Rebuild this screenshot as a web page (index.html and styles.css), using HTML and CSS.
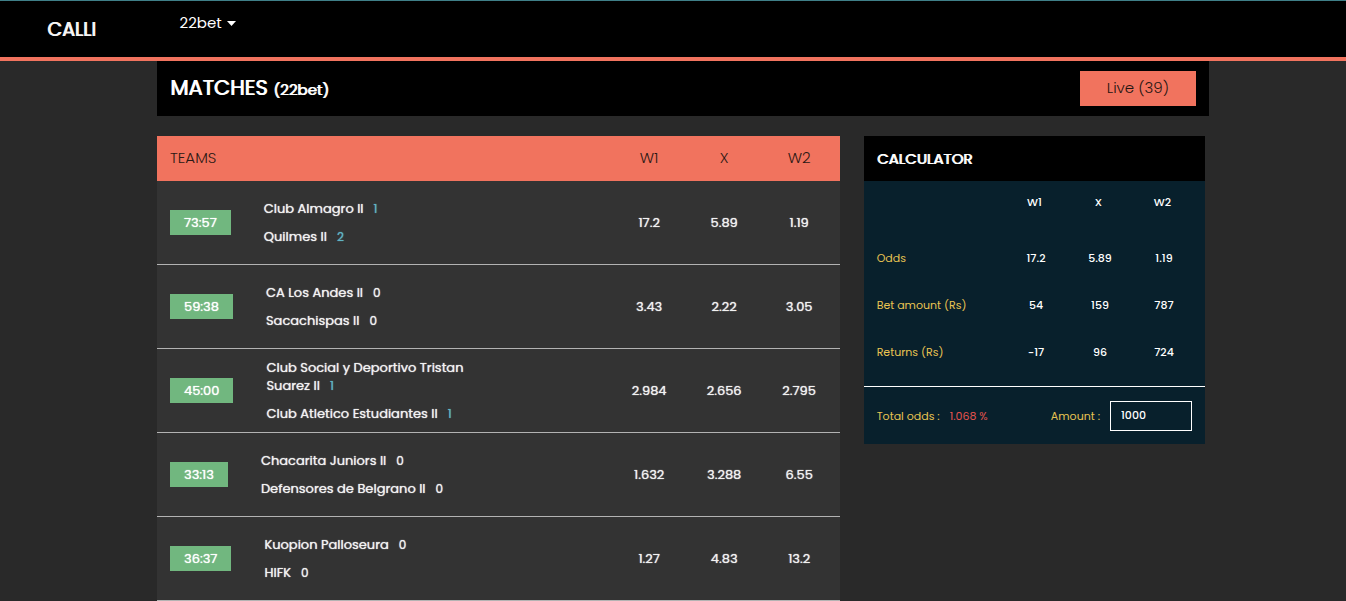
FILE: index.html
```html
<!DOCTYPE html>
<html lang="en">
<head>
<meta charset="utf-8">
<meta name="viewport" content="width=device-width, initial-scale=1">
<title>CALLI</title>
<link rel="stylesheet" href="styles.css">
</head>
<body>
<header class="navbar">
  <a class="brand" href="#">CALLI</a>
  <button class="site-menu" type="button" aria-haspopup="true">22bet
    <svg class="caret" viewBox="0 0 9 5" aria-hidden="true"><path d="M0 0H9L4.500 5Z"/></svg>
  </button>
</header>
<main class="page">
  <section class="title-bar">
    <h1 class="title">MATCHES <small class="title-site">(22bet)</small></h1>
    <button class="live-button" type="button">Live (39)</button>
  </section>
  <div class="columns">
    <table class="matches">
      <thead>
        <tr><th class="teams-head" scope="col">TEAMS</th><th class="odd" scope="col">W1</th><th class="odd" scope="col">X</th><th class="odd odd-last" scope="col">W2</th></tr>
      </thead>
      <tbody>
        <tr>
          <td><div class="match"><span class="time">73:57</span><div class="teams"><p class="team">Club Almagro II<span class="score scored">1</span></p><p class="team">Quilmes II<span class="score scored">2</span></p></div></div></td>
          <td class="odd">17.2</td><td class="odd">5.89</td><td class="odd odd-last">1.19</td>
        </tr>
        <tr>
          <td><div class="match"><span class="time">59:38</span><div class="teams"><p class="team">CA Los Andes II<span class="score">0</span></p><p class="team">Sacachispas II<span class="score">0</span></p></div></div></td>
          <td class="odd">3.43</td><td class="odd">2.22</td><td class="odd odd-last">3.05</td>
        </tr>
        <tr>
          <td><div class="match"><span class="time">45:00</span><div class="teams"><p class="team">Club Social y Deportivo Tristan Suarez II<span class="score scored">1</span></p><p class="team">Club Atletico Estudiantes II<span class="score scored">1</span></p></div></div></td>
          <td class="odd">2.984</td><td class="odd">2.656</td><td class="odd odd-last">2.795</td>
        </tr>
        <tr>
          <td><div class="match"><span class="time">33:13</span><div class="teams"><p class="team">Chacarita Juniors II<span class="score">0</span></p><p class="team">Defensores de Belgrano II<span class="score">0</span></p></div></div></td>
          <td class="odd">1.632</td><td class="odd">3.288</td><td class="odd odd-last">6.55</td>
        </tr>
        <tr>
          <td><div class="match"><span class="time">36:37</span><div class="teams"><p class="team">Kuopion Palloseura<span class="score">0</span></p><p class="team">HIFK<span class="score">0</span></p></div></div></td>
          <td class="odd">1.27</td><td class="odd">4.83</td><td class="odd odd-last">13.2</td>
        </tr>
      </tbody>
    </table>
    <aside class="calculator">
      <h2 class="calc-title">CALCULATOR</h2>
      <div class="calc-body">
        <table class="calc-table">
          <thead>
            <tr><td></td><th class="calc-col" scope="col">W1</th><th class="calc-col" scope="col">X</th><th class="calc-col" scope="col">W2</th></tr>
          </thead>
          <tbody>
            <tr><th class="calc-label" scope="row">Odds</th><td>17.2</td><td>5.89</td><td>1.19</td></tr>
            <tr><th class="calc-label" scope="row">Bet amount (Rs)</th><td>54</td><td>159</td><td>787</td></tr>
            <tr><th class="calc-label" scope="row">Returns (Rs)</th><td>-17</td><td>96</td><td>724</td></tr>
          </tbody>
        </table>
      </div>
      <div class="calc-footer">
        <span class="calc-total">Total odds :</span>
        <span class="calc-percent">1.068 %</span>
        <label class="amount-label" for="amount">Amount :</label>
        <input class="amount" id="amount" type="text" inputmode="numeric" value="1000">
      </div>
    </aside>
  </div>
</main>
</body>
</html>
```
FILE: styles.css
```css
* {
  box-sizing: border-box;
}

body {
  margin: 0;
  background: #292929;
  color: #fff;
  font-family: Poppins, Inter, "Noto Sans", sans-serif;
  font-size: 13px;
  line-height: 18px;
}

button,
input {
  font-family: inherit;
}

h1, h2, p {
  margin: 0;
}

table {
  border-collapse: collapse;
}

th, td {
  padding: 0;
}

.navbar {
  display: flex;
  align-items: flex-start;
  gap: 84px;
  height: 61px;
  padding: 10px 47px 0;
  background: #000;
  border-top: 1px solid #3f7f88;
  border-bottom: 4px solid #f1735e;
}

.brand {
  padding-top: 6px;
  color: #f5f5f5;
  font-size: 19px;
  font-weight: 400;
  line-height: 26px;
  text-decoration: none;
}

.brand,
.title,
.calc-title {
  text-shadow: 1px 0 0 currentColor;
}

.site-menu {
  display: flex;
  align-items: center;
  gap: 5px;
  padding: 0;
  border: 0;
  background: none;
  color: #fff;
  font-size: 15px;
  line-height: 24px;
}

.caret {
  width: 9px;
  height: 5px;
  fill: #fff;
}

.page {
  padding: 0 137px 0 157px;
}

.title-bar {
  display: flex;
  align-items: center;
  justify-content: space-between;
  height: 55px;
  padding: 0 13px;
  background: #000;
}

.title {
  font-size: 21px;
  font-weight: 400;
  line-height: 30px;
}

.title-site {
  font-size: 15px;
}

.live-button {
  height: 35px;
  padding: 0 27px 2px;
  border: 0;
  background: #f1735e;
  color: #241512;
  font-size: 15px;
  font-weight: 300;
}

.columns {
  display: grid;
  grid-template-columns: 2fr 1fr;
  align-items: start;
  gap: 24px;
  padding: 20px 4px 0 0;
}

.matches {
  width: 100%;
  table-layout: fixed;
  background: #333;
  border-collapse: separate;
  border-spacing: 0;
}

.matches th {
  height: 45px;
  padding-bottom: 2px;
  background: #f1735e;
  color: #2b1814;
  font-size: 15px;
  font-weight: 300;
}

.matches .teams-head {
  padding-left: 13px;
  text-align: left;
}

.matches td {
  height: 84px;
  border-bottom: 1px solid #b3b3b3;
  color: #f2f2f2;
  text-shadow: 0 0 1px currentColor;
}

.matches .odd {
  width: 75px;
  text-align: center;
}

.matches .odd-last {
  width: 78px;
  padding-right: 3px;
}

.match {
  display: flex;
  align-items: center;
  gap: 33px;
  padding-left: 13px;
}

.time {
  padding: 0 14px;
  background: #71b77f;
  color: #fff;
  line-height: 25px;
}

.teams {
  display: grid;
  gap: 10px;
  max-width: 220px;
}

.score {
  margin-left: 10px;
  font-size: 12px;
  line-height: 1;
}

.scored {
  color: #60b4c4;
}

.calculator {
  background: #08202c;
  font-size: 11px;
}

.calc-title {
  padding-left: 13px;
  background: #000;
  font-size: 15px;
  font-weight: 400;
  line-height: 45px;
}

.calc-body {
  padding: 0 9px 11px 13px;
  border-bottom: 1px solid #fff;
}

.calc-table {
  width: 100%;
  table-layout: fixed;
}

.calc-table .calc-col {
  width: 64px;
  height: 53px;
  padding: 12px 3px 0 0;
  vertical-align: top;
  font-weight: 500;
}

.calc-table tbody td {
  height: 47px;
  text-align: center;
  font-weight: 500;
}

.calc-label {
  color: #e9c452;
  font-weight: 400;
  text-align: left;
}

.calc-footer {
  display: flex;
  align-items: center;
  height: 57px;
  padding: 0 13px;
}

.calc-total,
.amount-label {
  color: #e9c452;
}

.calc-percent {
  margin-left: 10px;
  color: #e6534e;
}

.amount-label {
  margin-left: auto;
}

.amount {
  width: 82px;
  height: 30px;
  margin-left: 10px;
  padding: 0 10px;
  border: 1px solid #fff;
  border-radius: 0;
  background: transparent;
  color: #fff;
  font-size: 11px;
  font-weight: 500;
}
```
